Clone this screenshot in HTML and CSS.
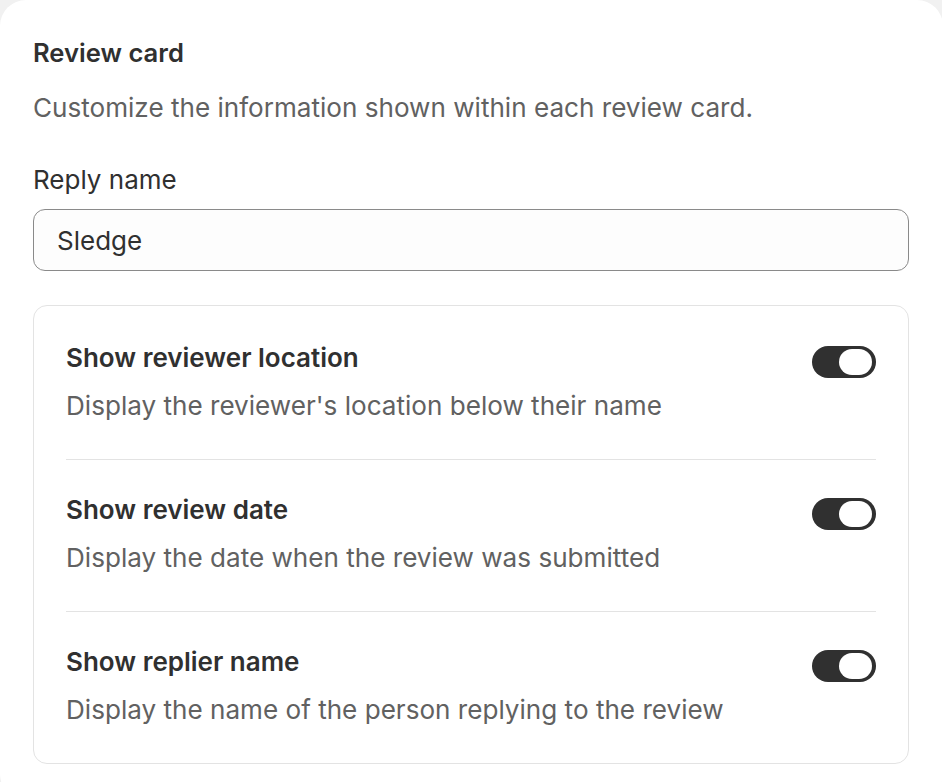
FILE: index.html
```html
<!DOCTYPE html>
<html lang="en">
<head>
<meta charset="utf-8">
<title>Review card</title>
<link rel="stylesheet" href="styles.css">
</head>
<body>
<section class="card">
  <h2 class="card-title">Review card</h2>
  <p class="card-desc">Customize the information shown within each review card.</p>
  <label class="field-label" for="reply-name">Reply name</label>
  <div class="input-wrap">
    <input id="reply-name" class="text-input" type="text" value="Sledge">
  </div>
  <div class="options">
    <div class="option">
      <div class="option-text">
        <div class="option-title">Show reviewer location</div>
        <div class="option-desc">Display the reviewer's location below their name</div>
      </div>
      <span class="toggle"><span class="knob"></span></span>
    </div>
    <div class="divider"></div>
    <div class="option">
      <div class="option-text">
        <div class="option-title">Show review date</div>
        <div class="option-desc">Display the date when the review was submitted</div>
      </div>
      <span class="toggle"><span class="knob"></span></span>
    </div>
    <div class="divider"></div>
    <div class="option">
      <div class="option-text">
        <div class="option-title">Show replier name</div>
        <div class="option-desc">Display the name of the person replying to the review</div>
      </div>
      <span class="toggle"><span class="knob"></span></span>
    </div>
  </div>
</section>
</body>
</html>
```

FILE: styles.css
```css
* { box-sizing: border-box; }
html, body { margin: 0; padding: 0; }
body {
  background: #f1f1f1;
  font-family: Inter, "Noto Sans", "Liberation Sans", sans-serif;
  color: #303030;
  width: 942px;
  height: 782px;
  overflow: hidden;
}
.card {
  background: #ffffff;
  border-radius: 26px;
  width: 943px;
  min-height: 800px;
  padding: 33px 33px 32px 33px;
  display: flex;
  flex-direction: column;
}
.card-title {
  margin: 0;
  font-size: 25.6px;
  line-height: 40px;
  font-weight: 600;
  color: #303030;
}
.card-desc {
  margin: 15px 0 0;
  font-size: 26.1px;
  line-height: 40px;
  font-weight: 400;
  color: #616161;
}
.field-label {
  margin-top: 32px;
  font-size: 26px;
  line-height: 40px;
  color: #303030;
}
.input-wrap { margin-top: 9px; }
.text-input {
  display: block;
  width: 876px;
  height: 62px;
  border: 1px solid #8a8a8a;
  border-radius: 12px;
  background: #fdfdfd;
  padding: 0 23px;
  font-family: inherit;
  font-size: 26px;
  color: #303030;
  outline: none;
}
.options {
  margin-top: 34px;
  width: 876px;
  border: 1px solid #e3e3e3;
  border-radius: 14px;
  padding: 32px 32px 33px 32px;
}
.option {
  display: flex;
  justify-content: space-between;
  align-items: flex-start;
}
.option-title {
  font-size: 26px;
  line-height: 40px;
  font-weight: 600;
  color: #303030;
}
.option-desc {
  margin-top: 8px;
  font-size: 26.1px;
  line-height: 40px;
  color: #616161;
}
.divider {
  height: 1px;
  background: #e3e3e3;
  margin: 33px 0 30px;
}
.toggle {
  position: relative;
  margin-top: 8px;
  width: 64px;
  height: 32px;
  border-radius: 16px;
  background: #303030;
  flex-shrink: 0;
}
.knob {
  position: absolute;
  top: 3px;
  right: 4px;
  width: 33px;
  height: 26px;
  border-radius: 13px;
  background: #ffffff;
}
```
